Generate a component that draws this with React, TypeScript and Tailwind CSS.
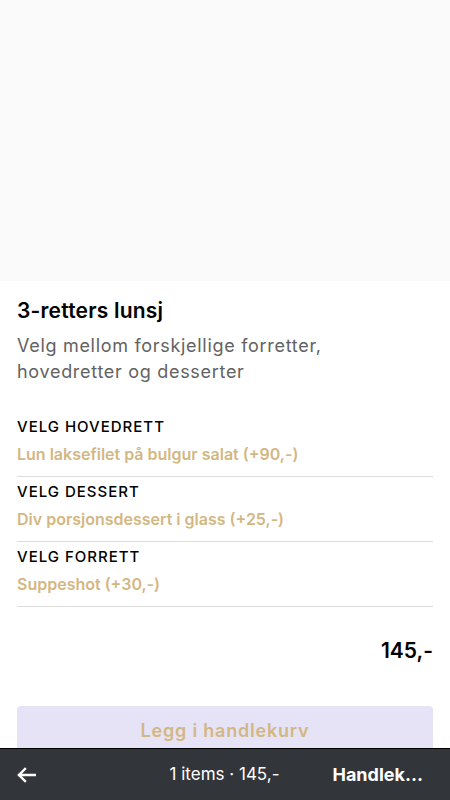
import React from 'react';

const choices = [
  { label: 'VELG HOVEDRETT', value: 'Lun laksefilet på bulgur salat (+90,-)' },
  { label: 'VELG DESSERT', value: 'Div porsjonsdessert i glass (+25,-)' },
  { label: 'VELG FORRETT', value: 'Suppeshot (+30,-)' },
];

const App = () => {
  return (
    <div className="relative min-h-screen bg-white font-['Inter',sans-serif] text-black">
      {/* Image placeholder */}
      <div className="h-[281px] bg-[#fafafa]"></div>

      <div className="px-[17px] pb-[60px]">
        <h1 className="mt-[16px] text-[21px] font-semibold leading-[28px] tracking-[0.2px]">3-retters lunsj</h1>
        <p className="mt-[8px] max-w-[340px] text-[18px] leading-[26px] tracking-[0.7px] text-[#626262]">
          Velg mellom forskjellige forretter, hovedretter og desserter
        </p>

        <div className="mt-[32px]">
          {choices.map((choice) => (
            <div key={choice.label} className="border-b border-[#dcdcdc] pt-[5px] pb-[11px] first:pt-0">
              <div className="text-[15px] font-medium leading-[20px] tracking-[1px]">{choice.label}</div>
              <div className="mt-[6px] text-[16px] font-semibold leading-[22px] text-[#d3b783]">{choice.value}</div>
            </div>
          ))}
        </div>

        <div className="mt-[30px] flex justify-end text-[21px] font-semibold leading-[28px]">145,-</div>

        <button className="mt-[41px] flex h-[48px] w-full items-center justify-center rounded-[4px] bg-[#e6e3f6] text-[18px] font-semibold tracking-[0.8px] text-[#d3b783]">
          Legg i handlekurv
        </button>
      </div>

      {/* Bottom bar */}
      <div className="fixed bottom-0 left-0 right-0 grid h-[52px] grid-cols-[1fr_auto_1fr] items-center border-t border-black bg-[#32353a] pl-[17px] pr-[27px] text-white">
        <svg width="19" height="16" viewBox="0 0 19 16" fill="none" stroke="white" strokeWidth="2.4" strokeLinecap="square">
          <path d="M2 8h16M8 2L2 8l6 6" />
        </svg>
        <div className="pl-[9px] text-center text-[17px]">1 items · 145,-</div>
        <div className="text-right text-[18px] font-bold">Handlek...</div>
      </div>
    </div>
  );
};

export default App;
